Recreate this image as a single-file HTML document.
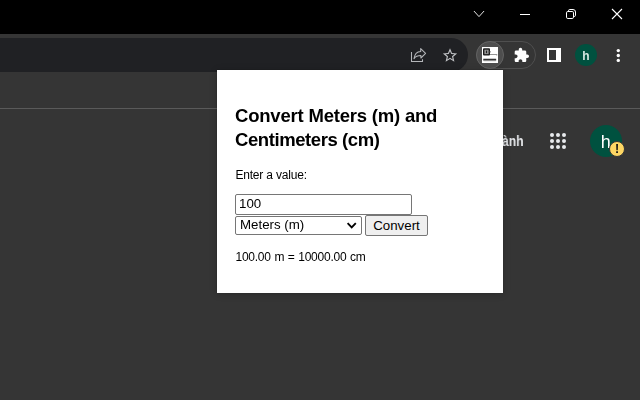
<!DOCTYPE html>
<html><head><meta charset="utf-8">
<style>
html,body{margin:0;padding:0;width:640px;height:400px;overflow:hidden;background:#353535;font-family:"Liberation Sans",sans-serif;}
.abs{position:absolute}
.g{will-change:transform}
#title{left:0;top:0;width:640px;height:34px;background:#000}
#strip{left:0;top:34px;width:640px;height:4px;background:#353535}
#bar{left:0;top:38px;width:640px;height:34px;background:#353535}
#omni{left:-20px;top:38px;width:488px;height:34px;background:#202124;border-radius:0 17px 17px 0}
#tool{left:0;top:72px;width:640px;height:36px;background:#353535}
#line{left:0;top:108px;width:640px;height:1px;background:#5a5a5a}
#page{left:0;top:109px;width:640px;height:291px;background:#353535}
#pill{left:476px;top:41px;width:60px;height:28px;border-radius:14px;box-sizing:border-box;border:1px solid #4f4f4f}
#hl{left:476px;top:41px;width:28px;height:28px;border-radius:14px;background:#4e4e4e;border:1px solid #626262;box-sizing:border-box}
#avatar{left:575px;top:44px;width:22px;height:22px;border-radius:11px;background:#00513f;color:#d5e8e1;font-weight:bold;font-size:12px;line-height:24px;text-align:center}
#anh{left:501.5px;top:132.5px;transform:scaleX(0.87);transform-origin:0 0;font-size:14px;font-weight:bold;color:#e8eaed;line-height:16px;white-space:nowrap}
#av2{left:590px;top:124.6px;width:32px;height:32px;border-radius:16px;background:#00513f;color:#fff;font-size:18px;line-height:35px;text-align:center;text-indent:-0.5px}
#badge{left:609px;top:141.4px;width:14px;height:14px;border-radius:9px;background:#fdd663;border:1px solid #353535;color:#111;font-weight:bold;font-size:12.5px;line-height:14.5px;text-align:center}
#popup{left:217px;top:70px;width:286px;height:223px;background:#fff;box-shadow:0 0 1.5px 0.3px rgba(0,0,0,.75),0 1px 7px rgba(0,0,0,.22)}
#popup h1{position:absolute;left:18px;top:34px;margin:0;font-size:18.5px;line-height:24px;font-weight:bold;color:#000;width:260px;letter-spacing:-0.2px}
#lbl{left:18.4px;top:98px;font-size:12px;color:#000;letter-spacing:-0.18px;white-space:nowrap}
#inp{left:18px;top:124px;width:175px;height:19px;border:1px solid #767676;border-radius:2px;box-sizing:content-box;font-size:13.3px;line-height:18.6px;padding:0 0 0 3px;width:172px;color:#000}
#sel{left:18px;top:146px;width:127px;height:19px;border:1px solid #767676;border-radius:2px;font-size:13.3px;line-height:16.6px;color:#000;box-sizing:border-box;padding-left:4px;background:#fff}
#btn{left:148px;top:145px;width:63px;height:21px;border:1px solid #767676;border-radius:2px;background:#efefef;font-size:13.3px;line-height:19px;text-align:center;color:#000;box-sizing:border-box}
#res{left:18.5px;top:180px;font-size:12px;color:#000;letter-spacing:-0.25px;word-spacing:0.6px;white-space:nowrap}
svg{position:absolute;left:0;top:0}
</style></head><body>
<div class="abs" id="title"></div>
<div class="abs" id="strip"></div>
<div class="abs" id="bar"></div>
<div class="abs" id="omni"></div>
<div class="abs" id="tool"></div>
<div class="abs" id="line"></div>
<div class="abs" id="page"></div>
<div class="abs" id="pill"></div>
<div class="abs" id="hl"></div>
<svg width="640" height="400" viewBox="0 0 640 400">
 <!-- window controls -->
 <path d="M474.2 11.3 L479 16.6 L483.8 11.3" fill="none" stroke="#f0f0f0" stroke-width="0.95" stroke-linecap="round"/>
 <rect x="520" y="14" width="10" height="1" fill="#fff"/>
 <rect x="566.5" y="11.5" width="7" height="7" rx="1.3" fill="none" stroke="#fff" stroke-width="1"/>
 <path d="M568.5 11 V10.8 a1.3 1.3 0 0 1 1.3 -1.3 H573 a2.5 2.5 0 0 1 2.5 2.5 V15.2 a1.3 1.3 0 0 1 -1.3 1.3 H574" fill="none" stroke="#fff" stroke-width="1"/>
 <path d="M612 9 L622 19 M622 9 L612 19" stroke="#fff" stroke-width="1.1" fill="none"/>
 <!-- share -->
 <g fill="none" stroke="#b4b6b9" stroke-width="1.05">
  <path d="M411.5 52 V61.5 H422.5 V59.2"/>
  <path d="M414 58.6 C414.6 54 417 51.6 420.7 51.4 V48.6 L425.6 53.4 L420.9 58 V55.5 C417.6 55.5 415.6 56.4 414 58.6 Z" stroke-linejoin="round"/>
 </g>
 <!-- star -->
 <path transform="translate(441.42 46.77) scale(0.715)" fill="#bfc1c4" d="M22 9.24l-7.19-.62L12 2 9.19 8.63 2 9.24l5.46 4.73L5.82 21 12 17.27 18.18 21l-1.63-7.03L22 9.24zM12 15.4l-3.76 2.27 1-4.28-3.32-2.88 4.38-.38L12 6.1l1.71 4.04 4.38.38-3.32 2.88 1 4.28L12 15.4z"/>
 <!-- ext icon -->
 <rect x="482" y="47" width="16" height="16" fill="#fff"/>
 <rect x="483" y="48.3" width="7" height="7.2" rx="1" fill="#1c1c1c"/>
 <rect x="484.4" y="49.7" width="4.2" height="4.4" fill="#9a9a9a"/>
 <rect x="485.9" y="50.6" width="1.2" height="2.6" fill="#222"/>
 <rect x="489.8" y="51" width="1" height="1.6" fill="#999"/>
 <rect x="490" y="54" width="7.2" height="0.9" fill="#8a8a8a"/>
 <rect x="496.4" y="54.5" width="0.8" height="1.2" fill="#999"/>
 <rect x="483" y="58.2" width="13.4" height="3" rx="1" fill="#b5b5b5"/>
 <rect x="483.4" y="59" width="12.6" height="1.3" fill="#333"/>
 <!-- puzzle -->
 <path transform="translate(513.34 47.12) scale(0.68)" fill="#fff" d="M20.5 11H19V7c0-1.1-.9-2-2-2h-4V3.5C13 2.12 11.88 1 10.5 1S8 2.12 8 3.5V5H4c-1.1 0-1.99.9-1.99 2v3.8H3.5c1.49 0 2.7 1.21 2.7 2.7s-1.21 2.7-2.7 2.7H2V20c0 1.1.9 2 2 2h3.8v-1.5c0-1.49 1.21-2.7 2.7-2.7 1.49 0 2.7 1.21 2.7 2.7V22H17c1.1 0 2-.9 2-2v-4h1.5c1.38 0 2.5-1.12 2.5-2.5S21.88 11 20.5 11z"/>
 <!-- side panel -->
 <rect x="547" y="48" width="14" height="14" fill="#fff"/>
 <rect x="549" y="50" width="7" height="10" fill="#353535"/>
 <!-- dots -->
 <circle cx="618.3" cy="50.6" r="1.7" fill="#fff"/>
 <circle cx="618.3" cy="55.5" r="1.7" fill="#fff"/>
 <circle cx="618.3" cy="60.4" r="1.7" fill="#fff"/>
 <!-- apps -->
 <g fill="#e8eaed">
  <circle cx="552" cy="135" r="2"/><circle cx="558" cy="135" r="2"/><circle cx="564" cy="135" r="2"/>
  <circle cx="552" cy="141" r="2"/><circle cx="558" cy="141" r="2"/><circle cx="564" cy="141" r="2"/>
  <circle cx="552" cy="147" r="2"/><circle cx="558" cy="147" r="2"/><circle cx="564" cy="147" r="2"/>
 </g>
</svg>
<div class="abs g" id="avatar">h</div>
<div class="abs g" id="anh">ành</div>
<div class="abs g" id="av2">h</div>
<div class="abs g" id="badge">!</div>
<div class="abs" id="popup">
<h1>Convert Meters (m) and<br><span style="letter-spacing:-0.42px">Centimeters (cm)</span></h1>
<div class="abs" id="lbl">Enter a value:</div>
<div class="abs" id="inp">100</div>
<div class="abs" id="sel">Meters (m)</div>
<svg width="286" height="223" viewBox="0 0 286 223"><path d="M130.6 153.2 L134.7 157.3 L138.8 153.2" fill="none" stroke="#000" stroke-width="1.9"/></svg>
<div class="abs" id="btn">Convert</div>
<div class="abs" id="res">100.00 m = 10000.00 cm</div>
</div>
</body></html>
